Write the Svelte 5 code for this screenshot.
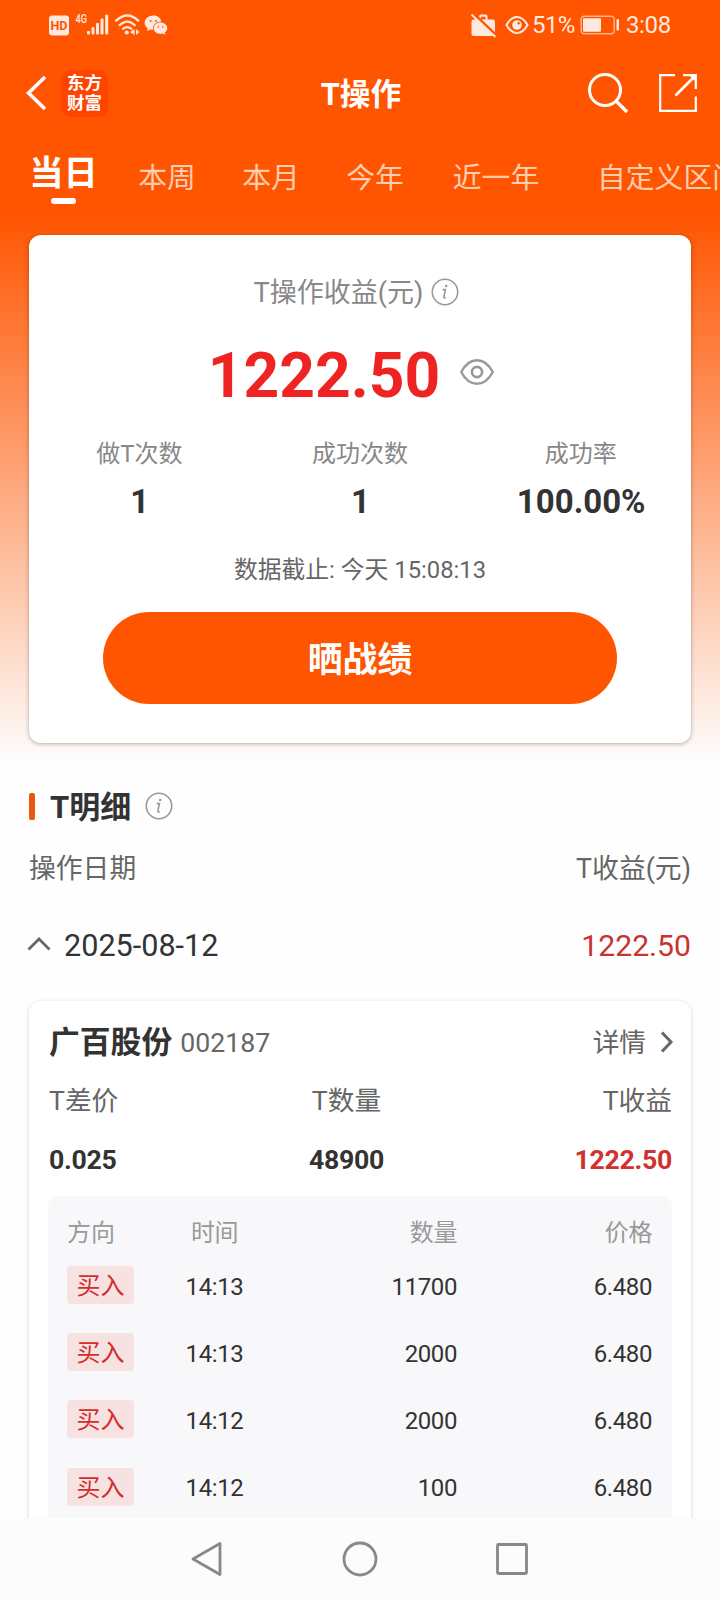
<script lang="ts">
	const tabs = ['当日', '本周', '本月', '今年', '近一年', '自定义区间'];
	let activeTab = $state('当日');
	let expanded = $state(true);

	const stats = [
		{ label: '做T次数', value: '1' },
		{ label: '成功次数', value: '1' },
		{ label: '成功率', value: '100.00%' }
	];

	const trades = [
		{ side: '买入', time: '14:13', amount: '11700', price: '6.480' },
		{ side: '买入', time: '14:13', amount: '2000', price: '6.480' },
		{ side: '买入', time: '14:12', amount: '2000', price: '6.480' },
		{ side: '买入', time: '14:12', amount: '100', price: '6.480' }
	];
</script>

{#snippet infoIcon()}
	<svg class="info-icon" width="28" height="28" viewBox="0 0 28 28" fill="none" stroke="#999" stroke-width="1.6">
		<circle cx="14" cy="14" r="12.7" />
		<path d="M11.7 11.6h2.7l-1.5 7.6q-.2 1.3 1.9.6" />
		<circle cx="15.2" cy="8" r="1.3" fill="#999" stroke="none" />
	</svg>
{/snippet}

<div class="page">
	<div class="status-bar">
		<div class="status-left">
			<svg width="120" height="24" viewBox="0 0 120 24" fill="#ffe9de">
				<rect x="1" y="2.5" width="20" height="20" rx="3" />
				<text x="11" y="17" text-anchor="middle" font-size="12.5" font-weight="700" fill="#ff5500">HD</text>
				<text x="27.5" y="10.4" font-size="13" font-weight="500" textLength="11.5" lengthAdjust="spacingAndGlyphs">4G</text>
				<rect x="39" y="18" width="3" height="3.5" rx="1" />
				<rect x="43.5" y="14" width="3" height="7.5" rx="1" />
				<rect x="48" y="10" width="3" height="11.5" rx="1" />
				<rect x="52.5" y="5.5" width="3" height="16" rx="1" />
				<rect x="57.2" y="1.500" width="3" height="20" rx="1" />
				<g fill="none" stroke="#ffe9de" stroke-width="2.3" stroke-linecap="round">
					<path d="M68 7.8q11.3-10.6 22.4 0" />
					<path d="M71.7 12.1q7.5-7 15 0" />
					<path d="M75.2 15.7q4-3.2 8 0" />
				</g>
				<circle cx="78.8" cy="19.5" r="2.1" />
				<path d="M86.5 16v6l-4.500-3zM88 16v6l3.500-3z" />
				<path d="M105.5 2.5c4.2 0 7.3 2.6 7.7 6-4.4 0-8.2 2.8-8.2 6.8l.3 1.5q-1.6.1-3.2-.4l-3.1 1.6.8-2.7c-2-1.3-3.2-3.3-3.2-5.5 0-4 4-7.3 8.9-7.3z" />
				<path d="M112.5 9.5c3.9 0 6.7 2.6 6.7 5.7 0 1.8-1 3.3-2.4 4.4l.5 2.2-2.3-1.2q-1.2.3-2.5.3c-3.9 0-6.7-2.600-6.7-5.700s2.800-5.700 6.700-5.700z" />
				<g fill="#ff5500">
					<circle cx="102.6" cy="7.9" r="1" />
					<circle cx="108" cy="7.9" r="1" />
					<circle cx="110.3" cy="13.900" r=".8" />
					<circle cx="114.8" cy="13.900" r=".8" />
				</g>
			</svg>
		</div>
		<div class="status-right">
			<svg width="28" height="26" viewBox="0 0 28 26">
				<path d="M3.500 7.500h5.500V4.500q0-2 2-2h4.500q2 0 2 2v3h5.500q2 0 2 2V22q0 2-2 2H3.500q-2 0-2-2V9.500q0-2 2-2zM11 4.700v2.800h4.500V4.700z" fill="#ffe9de" fill-rule="evenodd" />
				<path d="M3.500 1.500l23 22" stroke="#ff5500" stroke-width="2.600" />
				<path d="M1.500 2.500l24 22.500" stroke="#ffe9de" stroke-width="1.800" />
			</svg>
			<svg class="eye-status" width="24" height="20" viewBox="0 0 24 20" fill="none" stroke="#ffe9de" stroke-width="2">
				<path d="M1.5 10Q6 2 12 2t10.5 8Q18 18 12 18T1.5 10z" />
				<circle cx="12" cy="10" r="4.8" fill="#ffe9de" stroke="none" />
				<circle cx="13.700" cy="8.200" r="1.200" fill="#ff5500" stroke="none" />
			</svg>
			<span class="percent">51%</span>
			<svg class="battery" width="40" height="20" viewBox="0 0 40 20">
				<rect x="1.2" y="1.2" width="33" height="17.6" rx="3" fill="none" stroke="#ffb48e" stroke-width="1.4" />
				<rect x="3" y="3.3" width="18" height="13.4" rx="1" fill="#ffe9de" />
				<rect x="36.5" y="4" width="2.5" height="11.5" rx="1" fill="#ffe9de" />
			</svg>
			<span class="clock">3:08</span>
		</div>
	</div>

	<header class="header">
		<div class="header-side">
			<svg width="24" height="40" viewBox="0 0 24 40" fill="none" stroke="#fff" stroke-width="3.6">
				<path d="M21 4L4.5 20 21 36" />
			</svg>
			<div class="logo"><span>东方</span><span>财富</span></div>
		</div>
		<h1>T操作</h1>
		<div class="header-side header-actions">
			<svg width="44" height="44" viewBox="0 0 44 44" fill="none" stroke="#fff" stroke-width="3">
				<circle cx="19" cy="19" r="15.5" />
				<path d="M30 30l11 11" stroke-width="3.4" />
			</svg>
			<svg width="40" height="40" viewBox="0 0 40 40" fill="none" stroke="#fff" stroke-width="2.2">
				<path d="M17 2.2H2.2v35.6h35.6V23.5M25 2.2h12.8V16" />
				<path d="M37 3L17.5 22.5" stroke-width="2.6" />
				<path d="M31 2h7v7z" fill="#fff" stroke="none" />
			</svg>
		</div>
	</header>

	<nav class="tabs">
		{#each tabs as tab}
			<button type="button" class="tab" class:tab-active={tab === activeTab} class:tab-three={tab.length === 3} class:tab-wide={tab.length > 3} onclick={() => (activeTab = tab)}>
				{tab}
			</button>
		{/each}
	</nav>

	<section class="summary">
		<div class="summary-title">
			<span>T操作收益(元)</span>
			{@render infoIcon()}
		</div>
		<div class="profit">
			<span>1222.50</span>
			<svg width="36" height="28" viewBox="0 0 36 28" fill="none" stroke="#999" stroke-width="2.4">
				<path d="M2.2 14Q8.5 2.2 18 2.2T33.800 14Q27.500 25.800 18 25.800T2.200 14z" />
				<circle cx="18" cy="14" r="5.1" stroke-width="2.600" />
			</svg>
		</div>
		<div class="stats">
			{#each stats as stat}
				<div class="stat">
					<span class="stat-label">{stat.label}</span>
					<span class="stat-value">{stat.value}</span>
				</div>
			{/each}
		</div>
		<div class="deadline">数据截止: 今天 15:08:13</div>
		<button type="button" class="share-button">晒战绩</button>
	</section>

	<section class="details">
		<div class="section-title">
			<i class="marker"></i>
			<h2>T明细</h2>
			{@render infoIcon()}
		</div>
		<div class="list-head">
			<span>操作日期</span>
			<span>T收益(元)</span>
		</div>
		<button type="button" class="date-row" aria-expanded={expanded} onclick={() => (expanded = !expanded)}>
			<svg class:collapsed={!expanded} width="24" height="18" viewBox="0 0 24 18" fill="none" stroke="#666" stroke-width="2.8">
				<path d="M1.5 14.5L12 4l10.5 10.5" />
			</svg>
			<span class="date">2025-08-12</span>
			<span class="date-profit">1222.50</span>
		</button>

		{#if expanded}
			<div class="stock">
				<div class="stock-head">
					<strong>广百股份</strong>
					<span class="code">002187</span>
					<span class="more">详情</span>
					<svg width="14" height="24" viewBox="0 0 14 24" fill="none" stroke="#666" stroke-width="3">
						<path d="M2 2.5l9 9.500-9 9.500" />
					</svg>
				</div>
				<div class="triple triple-label">
					<span>T差价</span>
					<span>T数量</span>
					<span>T收益</span>
				</div>
				<div class="triple triple-value">
					<span>0.025</span>
					<span>48900</span>
					<span class="red">1222.50</span>
				</div>
				<div class="trades">
					<div class="trade trade-head">
						<span>方向</span>
						<span class="time">时间</span>
						<span class="num">数量</span>
						<span class="num">价格</span>
					</div>
					{#each trades as trade}
						<div class="trade">
							<span class="side">{trade.side}</span>
							<span class="time">{trade.time}</span>
							<span class="num">{trade.amount}</span>
							<span class="num">{trade.price}</span>
						</div>
					{/each}
				</div>
			</div>
		{/if}
	</section>

	<footer class="nav-bar">
		<svg width="36" height="40" viewBox="0 0 36 40"><path d="M30 4.500v31L3 20z" /></svg>
		<svg width="36" height="40" viewBox="0 0 36 40"><circle cx="18" cy="20" r="16" /></svg>
		<svg width="36" height="40" viewBox="0 0 36 40"><rect x="3.5" y="5.5" width="29" height="29" rx="1" /></svg>
	</footer>
</div>

<style>
	:global(body) {
		background: #fefefe;
	}

	.page {
		width: 720px;
		height: 1600px;
		display: flex;
		flex-direction: column;
		overflow: hidden;
		font-family: Roboto, 'Noto Sans CJK SC', sans-serif;
		color: #333;
		background: linear-gradient(#ff5500 215px, #fefefe 765px);
	}

	svg {
		display: block;
		flex: none;
	}

	button {
		padding: 0;
		border: none;
		background: transparent;
		font-family: inherit;
		color: inherit;
		cursor: pointer;
	}

	.status-bar {
		flex: none;
		height: 50px;
		display: flex;
		justify-content: space-between;
		align-items: center;
		padding: 0 49px 0 48px;
		font-size: 24px;
		line-height: 50px;
		color: #ffe9de;
	}

	.status-right {
		display: flex;
		align-items: center;
	}

	.eye-status {
		margin: 0 3px 0 7px;
	}

	.percent {
		width: 48px;
		letter-spacing: -0.6px;
	}

	.battery {
		margin-right: 6px;
	}

	.clock {
		letter-spacing: -0.3px;
	}

	.header {
		flex: none;
		height: 86px;
		display: flex;
		align-items: center;
		justify-content: space-between;
		padding: 0 22px 0 24px;
	}

	.header-side {
		width: 200px;
		display: flex;
		align-items: center;
	}

	.header-actions {
		justify-content: flex-end;
		gap: 28px;
	}

	.logo {
		width: 47px;
		height: 47px;
		margin-left: 13px;
		border-radius: 9px;
		background: #ff4400;
		display: flex;
		flex-direction: column;
		justify-content: center;
		align-items: center;
		font-size: 17.5px;
		font-weight: 700;
		line-height: 20px;
		color: #fff;
	}

	h1 {
		margin: 0;
		padding-top: 4px;
		font-size: 30.7px;
		font-weight: 700;
		line-height: 36px;
		color: #fff;
	}

	.tabs {
		flex: none;
		height: 99px;
		display: flex;
		padding-left: 11px;
		overflow: hidden;
	}

	.tab {
		flex: none;
		width: 104px;
		height: 84px;
		font-size: 28.8px;
		line-height: 84px;
		white-space: nowrap;
		color: #ffcdb0;
	}

	.tab-three {
		width: 138px;
	}

	.tab-wide {
		width: 208px;
	}

	.tab-active {
		display: flex;
		flex-direction: column;
		align-items: center;
		padding-left: 1px;
		font-size: 34.3px;
		font-weight: 700;
		line-height: 74px;
		color: #fff;
	}

	.tab-active::after {
		content: '';
		flex: none;
		width: 25px;
		height: 6px;
		margin-top: -12px;
		border-radius: 3px;
		background: #fff;
	}

	.summary {
		flex: none;
		height: 508px;
		margin: 0 29px;
		border-radius: 12px;
		background: #fff;
		box-shadow: 0 1px 4px rgba(0, 0, 0, 0.3);
		display: flex;
		flex-direction: column;
		align-items: center;
	}

	.summary-title {
		display: flex;
		align-items: center;
		gap: 8px;
		margin-top: 37px;
		padding-right: 7px;
		font-size: 27px;
		line-height: 42px;
		color: #888;
	}

	.info-icon {
		margin-bottom: 3px;
	}

	.profit {
		display: flex;
		align-items: center;
		gap: 19px;
		margin-top: 20px;
		padding-right: 17px;
		font-size: 62.3px;
		font-weight: 700;
		line-height: 84px;
		color: #ee2424;
	}

	.profit svg {
		margin-bottom: 8px;
	}

	.stats {
		align-self: stretch;
		display: grid;
		grid-template-columns: repeat(3, 1fr);
		margin-top: 15px;
	}

	.stat {
		display: flex;
		flex-direction: column;
		align-items: center;
	}

	.stat-label {
		font-size: 24px;
		line-height: 42px;
		color: #888;
	}

	.stat-value {
		padding-left: 1px;
		font-size: 33px;
		font-weight: 700;
		line-height: 54px;
		color: #333;
	}

	.deadline {
		margin-top: 21px;
		font-size: 23.8px;
		line-height: 40px;
		color: #666;
	}

	.share-button {
		width: 514px;
		height: 92px;
		margin-top: 22px;
		padding-top: 5px;
		border-radius: 46px;
		background: #ff5500;
		font-size: 34.9px;
		font-weight: 700;
		line-height: 87px;
		color: #fff;
	}

	.details {
		flex: 1;
		min-height: 0;
		overflow: hidden;
		padding: 43px 29px 0;
	}

	.section-title {
		display: flex;
		align-items: center;
		height: 42px;
	}

	.marker {
		width: 6px;
		height: 27px;
		margin-bottom: 1px;
		border-radius: 2px;
		background: #ea560f;
	}

	h2 {
		margin: 0 14px 0 15px;
		padding-top: 2px;
		font-size: 31px;
		font-weight: 700;
		line-height: 40px;
	}

	.list-head {
		display: flex;
		justify-content: space-between;
		margin-top: 22px;
		font-size: 26.8px;
		line-height: 38px;
		color: #666;
	}

	.date-row {
		width: 100%;
		height: 60px;
		display: flex;
		align-items: center;
		margin-top: 28px;
		font-size: 30.6px;
		line-height: 60px;
		color: #333;
	}

	.date-row svg {
		margin: 0 13px 5px -2px;
	}

	.collapsed {
		transform: rotate(180deg);
	}

	.date-profit {
		margin-left: auto;
		font-size: 30.2px;
		color: #c93232;
	}

	.stock {
		margin-top: 25px;
		padding: 14px 19px 0 20px;
		height: 620px;
		border-radius: 12px;
		background: #fff;
		box-shadow: 0 1px 4px rgba(0, 0, 0, 0.16);
	}

	.stock-head {
		display: flex;
		align-items: center;
		height: 56px;
		font-size: 26.7px;
		line-height: 56px;
		color: #666;
	}

	.stock-head strong {
		font-size: 30.8px;
		color: #333;
	}

	.stock-head svg {
		margin: 0 -2px 3px 0;
	}

	.code {
		margin-left: 8px;
	}

	.more {
		margin: 0 14px 0 auto;
	}

	.triple {
		display: grid;
		grid-template-columns: 1fr auto 1fr;
		font-size: 26.7px;
		line-height: 58px;
	}

	.triple span:nth-child(2) {
		width: 76px;
		margin-right: 28px;
		text-align: center;
	}

	.triple span:last-child {
		text-align: right;
	}

	.triple-label {
		padding-top: 1px;
	}

	.triple-label span {
		color: #666;
	}

	.triple-value {
		padding-top: 1px;
		font-weight: 700;
		letter-spacing: -0.3px;
	}

	.triple-value .red {
		color: #d03030;
	}

	.trades {
		margin: 7px 0 0 -1px;
		padding-top: 17px;
		height: 420px;
		border-radius: 10px;
		background: #f8f8fa;
	}

	.trade {
		display: grid;
		grid-template-columns: 67px 161px 162px 195px;
		align-items: center;
		height: 67.2px;
		padding: 0 19px;
		font-size: 24px;
		line-height: 38px;
	}

	.trade-head {
		height: 40px;
		color: #999;
	}

	.side {
		height: 38px;
		margin-bottom: 3px;
		padding-top: 1px;
		box-sizing: border-box;
		border-radius: 4px;
		background: #f7e2e2;
		text-align: center;
		color: #d62c2c;
	}

	.time {
		text-align: center;
	}

	.time,
	.num {
		letter-spacing: -0.4px;
	}

	.num {
		text-align: right;
	}

	.nav-bar {
		flex: none;
		height: 82px;
		display: flex;
		align-items: center;
		justify-content: center;
		gap: 116px;
		background: #fcfcfc;
	}

	.nav-bar svg {
		fill: none;
		stroke: #888;
		stroke-width: 2.8;
		stroke-linejoin: round;
	}
</style>
